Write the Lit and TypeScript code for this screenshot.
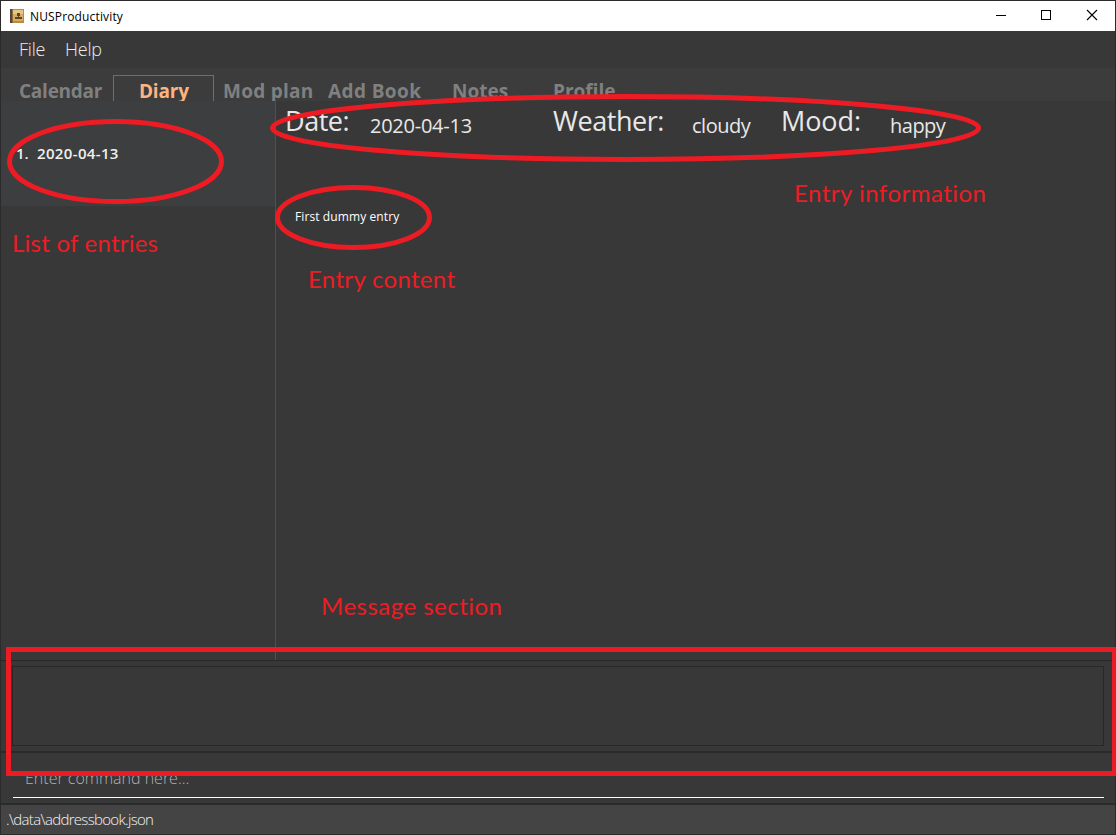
import { LitElement, html, css, svg } from "lit";
import { customElement, property } from "lit/decorators.js";

@customElement("title-bar")
class TitleBar extends LitElement {
  static styles = css`
    :host { display: flex; height: 30px; background: #fff; color: #000; align-items: center; }
    .logo { margin-left: 9px; width: 14px; height: 14px; flex: none; }
    .name { margin-left: 6px; padding-top: 2px; flex: 1; font: 12px/30px "Open Sans", sans-serif; letter-spacing: 0.15px; }
    .controls { width: 137px; height: 30px; flex: none; }
  `;
  render() {
    return html`
      <svg class="logo" viewBox="0 0 14 14" shape-rendering="crispEdges">
        <rect width="14" height="14" fill="#b98a45" />
        <rect x="3" y="1" width="10" height="11" fill="#d9ab5e" />
        <rect x="3" y="1" width="10" height="4" fill="#e8c582" />
        <rect width="2" height="14" fill="#55473a" />
        <rect x="2" width="1" height="14" fill="#8b6a3b" />
        <rect x="7" y="4" width="3" height="3" fill="#5a452a" />
        <rect x="8" y="7" width="1" height="2" fill="#5a452a" />
        <rect x="5" y="8" width="7" height="2" fill="#5a452a" />
      </svg>
      <span class="name">NUSProductivity</span>
      <svg class="controls" viewBox="0 0 137 30" fill="none" stroke="#000">
        <path d="M18 14.500h10" shape-rendering="crispEdges" />
        <path d="M63.500 9.500h9v9h-9z" shape-rendering="crispEdges" />
        <path d="M109 9l10 10M119 9l-10 10" stroke-width="1.1" />
      </svg>
    `;
  }
}

@customElement("tab-strip")
class TabStrip extends LitElement {
  @property({ type: String }) active = "Diary";
  tabs = [
    ["Calendar", "calendar"],
    ["Diary", "diary"],
    ["Mod plan", "mod"],
    ["Add Book", "book"],
    ["Notes", "notes"],
    ["Profile", "profile"],
  ];
  static styles = css`
    :host { display: flex; height: 33px; background: #3c3c3c; overflow: hidden; padding-top: 7px; box-sizing: border-box; }
    .tab { flex: none; box-sizing: border-box; height: 40px; color: #808080; font: bold 19px/32px "Open Sans", sans-serif; white-space: nowrap; }
    .active { color: #ffb380; border: 1px solid #0f8fc0; line-height: 30px; }
    .calendar { width: 112px; padding-left: 18px; letter-spacing: -0.25px; }
    .diary { width: 101px; padding-left: 25px; letter-spacing: -0.2px; }
    .mod { width: 105px; padding-left: 9px; letter-spacing: 0.25px; }
    .book { width: 124px; padding-left: 9px; letter-spacing: 0.4px; }
    .notes { width: 101px; padding-left: 9px; }
    .profile { width: 100px; padding-left: 9px; }
  `;
  render() {
    return this.tabs.map(
      ([label, cls]) => html`<div class="tab ${cls} ${label === this.active ? "active" : ""}">${label}</div>`
    );
  }
}

@customElement("app-root")
class AppRoot extends LitElement {
  static styles = css`
    :host { display: block; position: relative; width: 1116px; height: 835px; overflow: hidden; background: #383838; font-family: "Open Sans", sans-serif; color: #e8e8e8; }
    .window { display: flex; flex-direction: column; box-sizing: border-box; height: 835px; border: 1px solid #2b2b2b; white-space: nowrap; }
    .menu { display: flex; height: 37px; flex: none; padding-left: 18px; font: 300 18px/37px "Open Sans", sans-serif; letter-spacing: -0.2px; color: #ececec; }
    .file { width: 46px; }
    .main { display: flex; height: 559px; flex: none; }
    .list { width: 274px; flex: none; border-right: 1px solid #505050; }
    .row { display: flex; height: 105px; background: #3c3e3f; font: 600 15px/20px "Open Sans", sans-serif; padding: 42px 0 0 15px; box-sizing: border-box; color: #f0f0f0; }
    .num { width: 21px; }
    .day { letter-spacing: 0.35px; }
    .entry { flex: 1; min-width: 0; }
    .info { display: flex; height: 60px; padding-left: 9px; }
    .label { font-size: 27px; line-height: 40px; letter-spacing: -0.45px; }
    .value { font-size: 20px; line-height: 50px; letter-spacing: -0.5px; }
    .date-l { width: 85px; } .date-v { width: 183px; letter-spacing: -0.25px; }
    .weather-l { width: 139px; } .weather-v { width: 89px; }
    .mood-l { width: 109px; letter-spacing: -0.1px; }
    .content { padding: 46px 0 0 19px; font-size: 12px; line-height: 20px; letter-spacing: 0.1px; color: #fff; }
    .result { box-sizing: border-box; height: 91px; flex: none; border-top: 1px solid #282828; padding: 5px 11px 6px 11px; }
    .message { height: 78px; border: 1px solid #282828; }
    .command { box-sizing: border-box; height: 54px; flex: none; border-top: 2px solid #2a2a2a; border-bottom: 2px solid #2a2a2a; padding: 0 11px 0 12px; }
    .field { box-sizing: border-box; height: 45px; border-bottom: 1px solid #fff; padding-left: 12px; font-weight: 300; font-size: 16px; line-height: 50px; color: #b0b0b0; }
    .status { height: 29px; background: #444; font-weight: 300; font-size: 15px; line-height: 28px; letter-spacing: -0.68px; padding-left: 5px; flex: none; color: #f4f4f4; }
    .notes { position: absolute; inset: 0; width: 1116px; height: 835px; pointer-events: none; }
    .shape { fill: none; stroke: #ed1c24; stroke-width: 5px; }
    .caption { fill: #ed1c24; font: 24px Lato, sans-serif; font-variant-ligatures: none; }
  `;
  captions: [string, number, number, number][] = [
    ["List of entries", 12, 252, 146],
    ["Entry information", 794, 202, 192],
    ["Entry content", 308, 288, 147],
    ["Message section", 321, 615, 181],
  ];
  render() {
    return html`
      <div class="window">
        <title-bar></title-bar>
        <div class="menu"><span class="file">File</span><span class="help">Help</span></div>
        <tab-strip></tab-strip>
        <div class="main">
          <div class="list"><div class="row"><span class="num">1.</span><span class="day">2020-04-13</span></div></div>
          <div class="entry">
            <div class="info">
              <span class="label date-l">Date:</span><span class="value date-v">2020-04-13</span>
              <span class="label weather-l">Weather:</span><span class="value weather-v">cloudy</span>
              <span class="label mood-l">Mood:</span><span class="value mood-v">happy</span>
            </div>
            <div class="content">First dummy entry</div>
          </div>
        </div>
        <div class="result"><div class="message"></div></div>
        <div class="command"><div class="field">Enter command here...</div></div>
        <div class="status">.\\data\\addressbook.json</div>
      </div>
      <svg class="notes" viewBox="0 0 1116 835">
        <ellipse class="shape" cx="115.500" cy="161.500" rx="106" ry="40" />
        <ellipse class="shape" cx="625.500" cy="128" rx="353" ry="31.500" />
        <ellipse class="shape" cx="353.500" cy="217.500" rx="76" ry="30" />
        <rect class="shape" x="8.500" y="649.500" width="1106" height="124" />
        ${this.captions.map(
          ([text, x, y, w]) => svg`<text class="caption" x=${x} y=${y} textLength=${w}>${text}</text>`
        )}
      </svg>
    `;
  }
}
